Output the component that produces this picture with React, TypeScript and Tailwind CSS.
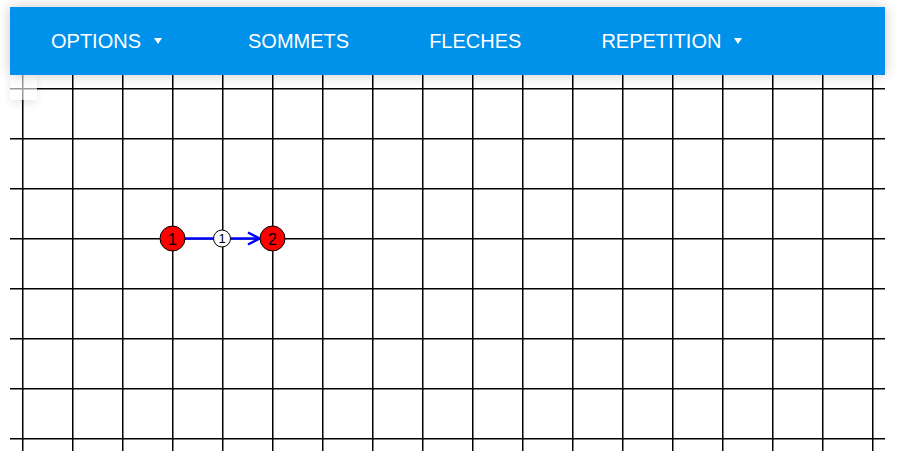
import React from 'react'

const menu = [
  { label: 'OPTIONS', dropdown: true, className: 'pl-[41px] pr-[40px]' },
  { label: 'SOMMETS', dropdown: false, className: 'px-[40px]' },
  { label: 'FLECHES', dropdown: false, className: 'px-[40px]' },
  { label: 'REPETITION', dropdown: true, className: 'px-[40px]' },
]

const W = 875
const H = 376
const cols = Array.from({ length: 18 }, (_, i) => 12 + i * 50)
const rows = Array.from({ length: 8 }, (_, i) => 13 + i * 50)

function Caret() {
  return (
    <svg width="8" height="6" viewBox="0 0 8 6" className="ml-[13px] mr-[6px]">
      <path d="M0 0 L8 0 L4 6 Z" fill="white" />
    </svg>
  )
}

function NavBar() {
  return (
    <nav className="h-[68px] bg-[#0091ea] flex items-center shadow-[0_0_12px_rgba(0,0,0,0.22)] relative z-10">
      {menu.map(item => (
        <div
          key={item.label}
          className={`flex items-center h-full text-white text-[20px] font-['Liberation_Sans',Arial,sans-serif] ${item.className}`}
        >
          <span>{item.label}</span>
          {item.dropdown && <Caret />}
        </div>
      ))}
    </nav>
  )
}

function Graph() {
  return (
    <svg width={W} height={H} className="block">
      {cols.map(x => (
        <line key={`c${x}`} x1={x + 0.75} y1={0} x2={x + 0.75} y2={H} stroke="black" strokeWidth={1.5} />
      ))}
      {rows.map(y => (
        <line key={`r${y}`} x1={0} y1={y + 0.75} x2={W} y2={y + 0.75} stroke="black" strokeWidth={1.5} />
      ))}
      {/* arrow 1 -> 2 */}
      <line x1={175} y1={163.5} x2={249} y2={163.5} stroke="#0000ff" strokeWidth={2.5} />
      <path
        d="M238 157.5 L249.5 163.5 L238 169.5"
        fill="none"
        stroke="#0000ff"
        strokeWidth={2.5}
      />
      <circle cx={162.5} cy={163.5} r={12.5} fill="#ff0000" stroke="black" strokeWidth={1} />
      <circle cx={262.5} cy={163.5} r={12.5} fill="#ff0000" stroke="black" strokeWidth={1} />
      <circle cx={212} cy={163.5} r={8.5} fill="white" stroke="black" strokeWidth={1} />
      <text x={162.5} y={169.5} textAnchor="middle" fontSize={16} fontFamily="Liberation Sans, Arial, sans-serif">
        1
      </text>
      <text x={262.5} y={169.5} textAnchor="middle" fontSize={16} fontFamily="Liberation Sans, Arial, sans-serif">
        2
      </text>
      <text x={212} y={168} textAnchor="middle" fontSize={13} fontFamily="Liberation Sans, Arial, sans-serif">
        1
      </text>
    </svg>
  )
}

export default function App() {
  return (
    <div className="w-[900px] h-[471px] bg-white overflow-hidden pt-[7px] pl-[10px] pr-[15px]">
      <NavBar />
      <div className="relative">
        <Graph />
        <div className="absolute left-0 top-0 w-[27px] h-[25px] bg-white/60 shadow-[0_3px_8px_rgba(0,0,0,0.1)]" />
      </div>
    </div>
  )
}
